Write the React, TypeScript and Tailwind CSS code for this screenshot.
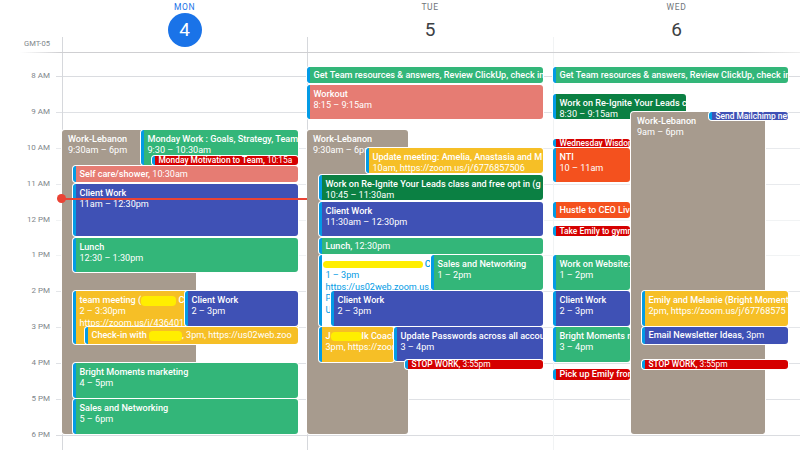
import React from 'react';

type Ev = {
  box: [number, number, number, number]; // page px: left, top, right, bottom
  color: string;
  lines: React.ReactNode[];
  plain?: boolean;
};

const GREEN = 'bg-[#33b679] text-white';
const CORAL = 'bg-[#e67c73] text-white';
const BLUE = 'bg-[#3f51b5] text-white';
const RED = 'bg-[#d50000] text-white';
const YELLOW = 'bg-[#f6bf26] text-white';
const DARK = 'bg-[#0b8043] text-white';
const ORANGE = 'bg-[#f4511e] text-white';
const TAN = 'bg-[#a79b8e] text-white';

const Scribble = ({ className }: { className: string }) => (
  <span className={`inline-block rounded-sm bg-[#ffee00] align-middle ${className}`} />
);

const Light = ({ children }: { children: React.ReactNode }) => <span className="font-normal">{children}</span>;

const monday: Ev[] = [
  { box: [62, 130, 196, 434], color: TAN, lines: ['Work-Lebanon', '9:30am – 6pm'], plain: true },
  { box: [141, 130, 298, 165], color: GREEN, lines: ['Monday Work : Goals, Strategy, Team', '9:30 – 10:30am'] },
  { box: [152, 156, 298, 165], color: RED, lines: [<>Monday Motivation to Team, <Light>10:15a</Light></>] },
  { box: [73, 166, 298, 182], color: CORAL, lines: [<>Self care/shower, <Light>10:30am</Light></>] },
  { box: [73, 184, 298, 236], color: BLUE, lines: ['Client Work', '11am – 12:30pm'] },
  { box: [73, 238, 298, 272], color: GREEN, lines: ['Lunch', '12:30 – 1:30pm'] },
  {
    box: [73, 291, 298, 344],
    color: YELLOW,
    lines: [<>team meeting (<Scribble className="h-[10px] w-[35px]" /> C</>, '2 – 3:30pm', 'https://zoom.us/j/436401'],
  },
  { box: [185, 291, 298, 326], color: BLUE, lines: ['Client Work', '2 – 3pm'] },
  {
    box: [85, 327, 298, 344],
    color: YELLOW,
    lines: [<>Check-in with <Scribble className="h-[10px] w-[33px]" /><Light>, 3pm, https://us02web.zoo</Light></>],
  },
  { box: [73, 363, 298, 398], color: GREEN, lines: ['Bright Moments marketing', '4 – 5pm'] },
  { box: [73, 399, 298, 434], color: GREEN, lines: ['Sales and Networking', '5 – 6pm'] },
];

const tuesday: Ev[] = [
  { box: [307, 67, 543, 83], color: GREEN, lines: ['Get Team resources & answers, Review ClickUp, check in'] },
  { box: [307, 85, 543, 119], color: CORAL, lines: ['Workout', '8:15 – 9:15am'] },
  { box: [307, 130, 408, 434], color: TAN, lines: ['Work-Lebanon', '9:30am – 6pm'], plain: true },
  { box: [366, 148, 543, 173], color: YELLOW, lines: ['Update meeting: Amelia, Anastasia and M', '10am, https://zoom.us/j/6776857506'] },
  { box: [319, 175, 543, 200], color: DARK, lines: ['Work on Re-Ignite Your Leads class and free opt in (g', '10:45 – 11:30am'] },
  { box: [319, 202, 543, 236], color: BLUE, lines: ['Client Work', '11:30am – 12:30pm'] },
  { box: [319, 238, 543, 254], color: GREEN, lines: [<>Lunch, <Light>12:30pm</Light></>] },
  {
    box: [319, 255, 432, 326],
    color: 'bg-white text-[#039be5]',
    lines: [<><Scribble className="-ml-[3px] h-[7px] w-[100px]" /> C</>, '1 – 3pm', 'https://us02web.zoom.us.', 'P', 'U'],
  },
  { box: [431, 255, 543, 290], color: GREEN, lines: ['Sales and Networking', '1 – 2pm'] },
  { box: [331, 291, 543, 326], color: BLUE, lines: ['Client Work', '2 – 3pm'] },
  { box: [319, 327, 394, 362], color: YELLOW, lines: [<>J<Scribble className="h-[9px] w-[31px]" />lk Coach</>, '3pm, https://zoom'] },
  { box: [394, 327, 543, 361], color: BLUE, lines: ['Update Passwords across all accou', '3 – 4pm'] },
  { box: [405, 360, 543, 369], color: RED, lines: [<>STOP WORK, <Light>3:55pm</Light></>] },
];

const wednesday: Ev[] = [
  { box: [553, 67, 788, 83], color: GREEN, lines: ['Get Team resources & answers, Review ClickUp, check in'] },
  { box: [553, 94, 686, 119], color: DARK, lines: ['Work on Re-Ignite Your Leads c', '8:30 – 9:15am'] },
  { box: [553, 139, 630, 147], color: RED, lines: ['Wednesday Wisdom'] },
  { box: [553, 148, 630, 182], color: ORANGE, lines: ['NTI', '10 – 11am'] },
  { box: [553, 202, 630, 218], color: ORANGE, lines: ['Hustle to CEO Live'] },
  { box: [553, 226, 630, 236], color: RED, lines: ['Take Emily to gymnastics'] },
  { box: [553, 255, 630, 290], color: GREEN, lines: ['Work on Website: ', '1 – 2pm'] },
  { box: [553, 291, 630, 326], color: BLUE, lines: ['Client Work', '2 – 3pm'] },
  { box: [553, 327, 630, 362], color: GREEN, lines: ['Bright Moments marketing', '3 – 4pm'] },
  { box: [553, 369, 630, 380], color: RED, lines: ['Pick up Emily from'] },
  { box: [631, 112, 765, 434], color: TAN, lines: ['Work-Lebanon', '9am – 6pm'], plain: true },
  { box: [709, 112, 788, 120], color: BLUE, lines: ['Send Mailchimp newsletter'] },
  { box: [642, 291, 788, 326], color: YELLOW, lines: ['Emily and Melanie (Bright Moments', '2pm, https://zoom.us/j/67768575'] },
  { box: [642, 327, 788, 344], color: BLUE, lines: [<>Email Newsletter Ideas, <Light>3pm</Light></>] },
  { box: [642, 360, 788, 369], color: RED, lines: [<>STOP WORK, <Light>3:55pm</Light></>] },
];

const days = [
  { name: 'MON', num: '4', today: true, x: 62, width: 'w-[245px]', border: 'border-[#d6d8dc]', events: monday },
  { name: 'TUE', num: '5', today: false, x: 307, width: 'w-[246px]', border: 'border-[#d6d8dc]', events: tuesday },
  { name: 'WED', num: '6', today: false, x: 553, width: 'w-[247px]', border: 'border-[#f1f3f4]', events: wednesday },
];

const hours = [
  { label: '8 AM', line: 'border-[#dadce0]' },
  { label: '9 AM', line: 'border-[#dfe1e5]' },
  { label: '10 AM', line: 'border-[#e8eaed]' },
  { label: '11 AM', line: 'border-[#e8eaed]' },
  { label: '12 PM', line: 'border-[#f1f3f4]' },
  { label: '1 PM', line: 'border-[#f1f3f4]' },
  { label: '2 PM', line: 'border-[#e4e6e9]' },
  { label: '3 PM', line: 'border-[#e4e6e9]' },
  { label: '4 PM', line: 'border-[#dfe1e5]' },
  { label: '5 PM', line: 'border-[#dfe1e5]' },
  { label: '6 PM', line: 'border-[#dadce0]' },
];

const BODY_TOP = 53;

function EventCard({ ev, colX }: { ev: Ev; colX: number }) {
  const [l, t, r, b] = ev.box;
  const h = b - t;
  const short = ev.lines.length === 1;
  const tiny = h <= 10;
  return (
    <div
      className={`absolute overflow-hidden rounded-[3px] leading-[11.4px] whitespace-nowrap shadow-[0_0_0_1px_#fff] ${ev.color} ${
        tiny ? 'text-[8.4px]' : 'text-[9.1px]'
      } ${ev.plain ? 'pl-[6px]' : 'border-l-[3px] border-[#039be5] pl-[3.5px]'} ${short ? 'flex items-center pt-[1px]' : 'pt-[4px]'}`}
      style={{ left: l - colX, top: t - BODY_TOP, width: r - l, height: h }}
    >
      <div>
        {ev.lines.map((line, i) => (
          <div key={i} className={i === 0 ? 'font-medium' : 'font-normal'}>
            {line}
          </div>
        ))}
      </div>
    </div>
  );
}

export default function App() {
  return (
    <div className="relative h-[450px] w-[800px] overflow-hidden bg-white font-['Roboto',sans-serif] text-[#80868b]">
      <div className="flex h-[52px]">
        <div className="flex w-[62px] justify-end pt-[39px] pr-[12px] text-[7.6px] leading-[10px]">GMT-05</div>
        {days.map((d) => (
          <div key={d.name} className={`flex flex-col ${d.width}`}>
            <div className="flex h-[37px] flex-col items-center pt-[2px]">
              <div className={`h-[11px] text-[8.5px] leading-[11px] tracking-[0.6px] ${d.today ? 'text-[#1a73e8]' : 'text-[#70757a]'}`}>
                {d.name}
              </div>
              <div
                className={`z-10 flex h-[34px] w-[34px] shrink-0 items-center justify-center rounded-full text-[19px] ${
                  d.today ? 'bg-[#1a73e8] text-white' : 'text-[#3c4043]'
                }`}
              >
                {d.num}
              </div>
            </div>
            <div className={`h-[15px] border-l ${d.border}`} />
          </div>
        ))}
      </div>
      <div className="h-px bg-[linear-gradient(to_right,transparent_20px,#cfcfd2_60px,#cfcfd2_740px,#eeeeee_800px)]" />

      <div className="flex">
        <div className="w-[62px]">
          <div className="h-[23px]" />
          {hours.map((h) => (
            <div key={h.label} className="relative h-[35.9px]">
              <span className="absolute right-[12px] -translate-y-1/2 text-[8px] leading-[10px]">{h.label}</span>
              <div className={`ml-[56px] border-t ${h.line}`} />
            </div>
          ))}
          <div className="h-[20px]" />
        </div>

        {days.map((d) => (
          <div key={d.name} className={`relative border-l ${d.border} ${d.width}`}>
            <div className="h-[23px]" />
            {hours.map((h) => (
              <div key={h.label} className={`h-[35.9px] border-t ${h.line}`} />
            ))}
            <div className="absolute inset-0 -left-px">
              {d.events.map((ev, i) => (
                <EventCard key={i} ev={ev} colX={d.x} />
              ))}
            </div>
          </div>
        ))}
      </div>

      <div className="absolute top-[198px] left-[62px] h-[1.5px] w-[245px] bg-[#ea4335]">
        <div className="absolute top-[-4px] left-[-5px] h-[9px] w-[9px] rounded-full bg-[#ea4335]" />
      </div>
    </div>
  );
}
